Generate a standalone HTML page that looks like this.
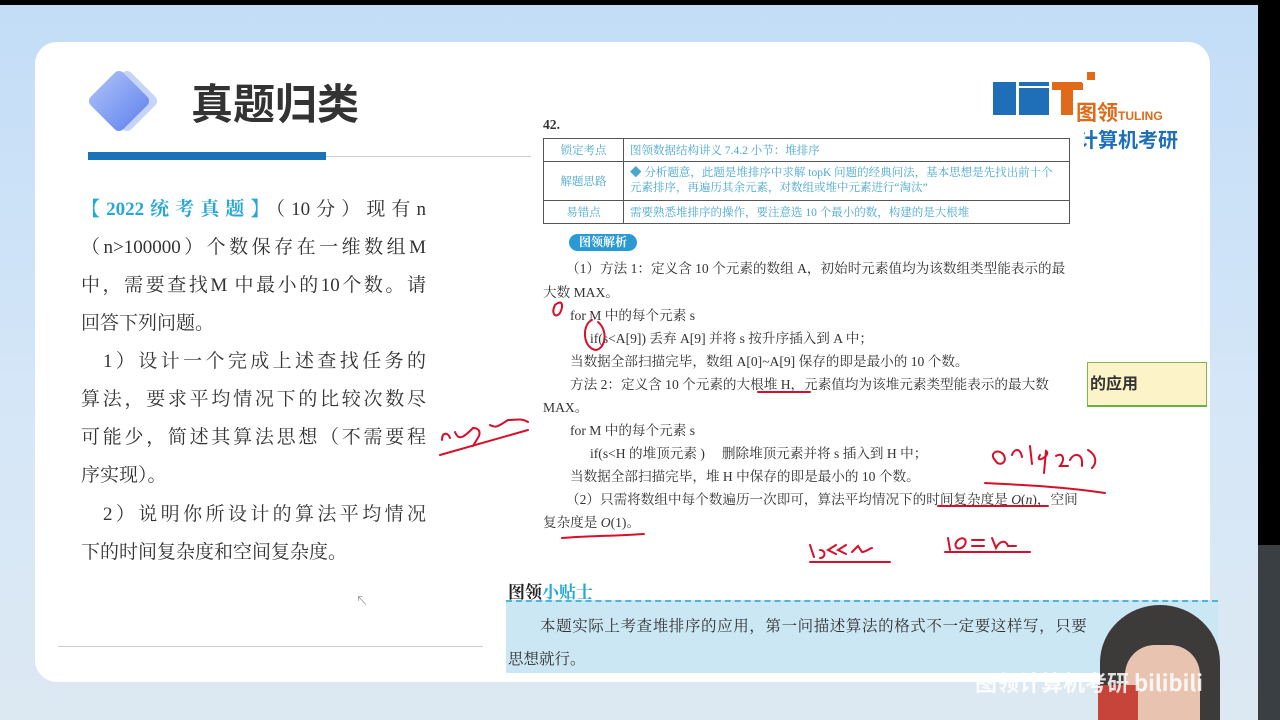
<!DOCTYPE html>
<html><head><meta charset="utf-8"><style>
*{margin:0;padding:0;box-sizing:border-box}
body{width:1280px;height:720px;overflow:hidden;position:relative;background:linear-gradient(180deg,#c3ddf7 0%,#d6e7f7 60%,#dce8f2 100%);font-family:"Liberation Serif","Noto Serif CJK SC",serif}
.abs{position:absolute}
.card{left:35px;top:42px;width:1175px;height:640px;background:#fff;border-radius:22px}
.lt{position:absolute;left:81px;width:345px;font-size:19px;line-height:24px;color:#333;text-align:justify;text-align-last:justify;white-space:nowrap;font-family:"Liberation Serif","Noto Serif CJK SC",serif}
.doc{font-size:13.6px;color:#333;white-space:nowrap;position:absolute}
.tb td{border:1px solid #555;color:#4aa8cf;font-size:11.5px;padding:2px 6px}
.red{fill:none;stroke:#d6102a;stroke-width:2;stroke-linecap:round}
</style></head><body>
<div class="abs" style="left:0;top:0;width:1280px;height:5px;background:#000"></div>
<div class="abs" style="left:1258px;top:5px;width:22px;height:540px;background:#000"></div>
<div class="abs" style="left:1258px;top:545px;width:22px;height:175px;background:#3a3f44"></div>
<div class="abs card"></div>
<!-- title -->
<div class="abs" style="top:78px;width:46px;height:46px;background:#c6d3fb;transform:rotate(45deg);border-radius:6px;left:104px"></div>
<div class="abs" style="left:96px;top:78px;width:46px;height:46px;background:linear-gradient(90deg,#9fb5f5,#6f8ff0);transform:rotate(45deg);border-radius:6px"></div>
<div class="abs" style="left:191px;top:80px;font-size:42px;font-weight:bold;color:#333;font-family:'Liberation Sans','Noto Sans CJK SC',sans-serif;line-height:50px">真题归类</div>
<div class="abs" style="left:88px;top:152px;width:238px;height:8px;background:#1a73b8"></div>
<div class="abs" style="left:326px;top:156px;width:205px;height:1px;background:#ccc"></div>
<!-- logo -->
<div class="abs" style="left:993px;top:82px;width:23px;height:33px;background:#1e6fb8"></div>
<div class="abs" style="left:1019px;top:88px;width:30px;height:27px;background:#1e6fb8"></div>
<div class="abs" style="left:1019px;top:82px;width:30px;height:4px;background:#1e6fb8"></div>
<div class="abs" style="left:1052px;top:82px;width:30px;height:8px;background:#e06a1a"></div>
<div class="abs" style="left:1061px;top:82px;width:12px;height:33px;background:#e06a1a"></div>
<div class="abs" style="left:1076px;top:83px;width:7px;height:7px;background:#e06a1a"></div>
<div class="abs" style="left:1087px;top:72px;width:8px;height:8px;background:#e06a1a"></div>
<div class="abs" style="left:1076px;top:100px;font-size:21px;font-weight:bold;color:#e06a1a;font-family:'Noto Sans CJK SC',sans-serif;line-height:24px">图领<span style="font-size:12px;font-family:'Liberation Sans',sans-serif">TULING</span></div>
<div class="abs" style="left:1078px;top:126px;font-size:20px;font-weight:bold;color:#1e6fb8;font-family:'Noto Sans CJK SC',sans-serif;line-height:26px">计算机考研</div>
<div class="abs" style="left:1070px;top:124px;width:14px;height:30px;background:#fff"></div>
<!-- left text -->
<div class="lt" style="top:198px"><span style="color:#27a7d6;font-weight:bold">【2022统考真题】</span>（10分）现有n</div>
<div class="lt" style="top:236px">（n&gt;100000）个数保存在一维数组M</div>
<div class="lt" style="top:274px">中，需要查找M 中最小的10个数。请</div>
<div class="lt" style="top:312px;text-align-last:left">回答下列问题。</div>
<div class="lt" style="top:350px;padding-left:22px">1）设计一个完成上述查找任务的</div>
<div class="lt" style="top:388px">算法，要求平均情况下的比较次数尽</div>
<div class="lt" style="top:426px">可能少，简述其算法思想（不需要程</div>
<div class="lt" style="top:464px;text-align-last:left">序实现）。</div>
<div class="lt" style="top:503px;padding-left:22px">2）说明你所设计的算法平均情况</div>
<div class="lt" style="top:541px;text-align-last:left">下的时间复杂度和空间复杂度。</div>
<div class="abs" style="left:58px;top:646px;width:425px;height:1px;background:#ccc"></div>
<!-- doc -->
<div class="doc" style="left:543px;top:117px;font-weight:bold">42.</div>
<table class="tb abs" style="left:543px;top:138px;width:527px;border-collapse:collapse;background:#fff">
<tr style="height:23px"><td style="width:80px;text-align:center">锁定考点</td><td>图领数据结构讲义 7.4.2 小节：堆排序</td></tr>
<tr style="height:39px"><td style="text-align:center">解题思路</td><td style="line-height:15px;white-space:normal">◆ 分析题意，此题是堆排序中求解 topK 问题的经典问法，基本思想是先找出前十个元素排序，再遍历其余元素，对数组或堆中元素进行“淘汰”</td></tr>
<tr style="height:23px"><td style="text-align:center">易错点</td><td>需要熟悉堆排序的操作，要注意选 10 个最小的数，构建的是大根堆</td></tr>
</table>
<div class="abs" style="left:569px;top:234px;width:68px;height:17px;background:#2a9ad4;border-radius:9px;color:#fff;font-size:12px;text-align:center;line-height:17px;font-weight:bold">图领解析</div>
<div class="doc" style="left:566px;top:257px">（1）方法 1：定义含 10 个元素的数组 A，初始时元素值均为该数组类型能表示的最</div>
<div class="doc" style="left:543px;top:281px">大数 MAX。</div>
<div class="doc" style="left:570px;top:304px">for M 中的每个元素 s</div>
<div class="doc" style="left:590px;top:327px">if(s&lt;A[9]) 丢弃 A[9] 并将 s 按升序插入到 A 中；</div>
<div class="doc" style="left:570px;top:350px">当数据全部扫描完毕，数组 A[0]~A[9] 保存的即是最小的 10 个数。</div>
<div class="doc" style="left:570px;top:373px">方法 2：定义含 10 个元素的大根堆 H，元素值均为该堆元素类型能表示的最大数</div>
<div class="doc" style="left:543px;top:396px">MAX。</div>
<div class="doc" style="left:570px;top:419px">for M 中的每个元素 s</div>
<div class="doc" style="left:590px;top:442px">if(s&lt;H 的堆顶元素 )&nbsp;&nbsp;&nbsp;&nbsp; 删除堆顶元素并将 s 插入到 H 中；</div>
<div class="doc" style="left:570px;top:465px">当数据全部扫描完毕，堆 H 中保存的即是最小的 10 个数。</div>
<div class="doc" style="left:566px;top:488px">（2）只需将数组中每个数遍历一次即可，算法平均情况下的时间复杂度是 <i>O</i>(<i>n</i>)，空间</div>
<div class="doc" style="left:543px;top:511px">复杂度是 <i>O</i>(1)。</div>
<!-- yellow box -->
<div class="abs" style="left:1087px;top:362px;width:120px;height:45px;background:#fcf3c8;border:1px solid #7db84a;border-bottom:2px solid #6ab040;font-size:16px;font-weight:bold;color:#333;padding-left:2px;line-height:43px;font-family:'Liberation Sans','Noto Sans CJK SC',sans-serif">的应用</div>
<!-- tip -->
<div class="abs" style="left:508px;top:578px;font-size:17px;font-weight:bold;color:#222;font-family:'Noto Serif CJK SC',serif">图领<span style="color:#23a9d9">小贴士</span></div>
<div class="abs" style="left:506px;top:600px;width:712px;height:73px;background:#cbe7f4;border-top:2px dashed #4cb6d6"></div>
<div class="abs" style="left:540px;top:614px;font-size:15.5px;color:#333;white-space:nowrap;letter-spacing:0.6px">本题实际上考查堆排序的应用，第一问描述算法的格式不一定要这样写，只要</div>
<div class="abs" style="left:508px;top:647px;font-size:15.5px;color:#333">思想就行。</div>
<!-- person -->
<div class="abs" style="left:1100px;top:605px;width:120px;height:115px;background:#3d3a3a;border-radius:50% 50% 0 0"></div>
<div class="abs" style="left:1125px;top:645px;width:75px;height:75px;background:#e8c4b0;border-radius:40% 40% 0 0"></div>
<div class="abs" style="left:1098px;top:685px;width:40px;height:35px;background:#c6443a"></div>
<div class="abs" style="left:975px;top:666px;font-size:22px;color:rgba(255,255,255,.85);font-weight:bold;font-family:'Noto Sans CJK SC',sans-serif">图领计算机考研 bilibili</div>
<!-- handwriting -->
<svg class="abs" style="left:0;top:0" width="1280" height="720">
<path class="red" d="M555 305c-4 8 0 14 5 8 4-8 2-14-5-8"/>
<path class="red" d="M592 320c-10 4-10 28 4 30 10-2 12-20 2-28"/>
<path class="red" d="M440 455l88-25M442 440c0-8 6-8 8-2M455 432c4 10 10 4 18-4 4 0 8 2 6 8l-6 10M490 425c6 4 10 0 18-5 8 0 14-2 20 2"/>
<path class="red" d="M758 392h52"/>
<path class="red" d="M995 460c-6-6 2-12 8-6 6 8-4 14-8 6M1012 455c2-6 8-8 10 2M1030 446l2 18M1040 455c-6 10 12 0 6-4l-2 22M1056 456c6-4 10 2 4 10h8M1070 460c4-8 12-6 12 2v4M1088 450c10 6 8 14 4 18"/>
<path class="red" d="M985 483c40 2 80 4 120 10"/>
<path class="red" d="M938 506h110"/>
<path class="red" d="M562 538c25-2 50-2 82-4"/>
<path class="red" d="M810 545l4 12M820 550c6 0 6 8 0 8M836 545l-8 5 8 4M846 545l-8 5 8 4M852 552l6-6 4 6c4 0 8-4 10-4M810 562h80"/>
<path class="red" d="M948 538l2 12M958 540c-6 6 0 12 6 6 4-6 0-10-6-6M972 540h12M972 546h12M992 538l4 10c4-8 10-8 12-2h8M945 552h85"/>
</svg>
<div class="abs" style="left:356px;top:592px;font-size:12px;color:#666">↖</div>
</body></html>
